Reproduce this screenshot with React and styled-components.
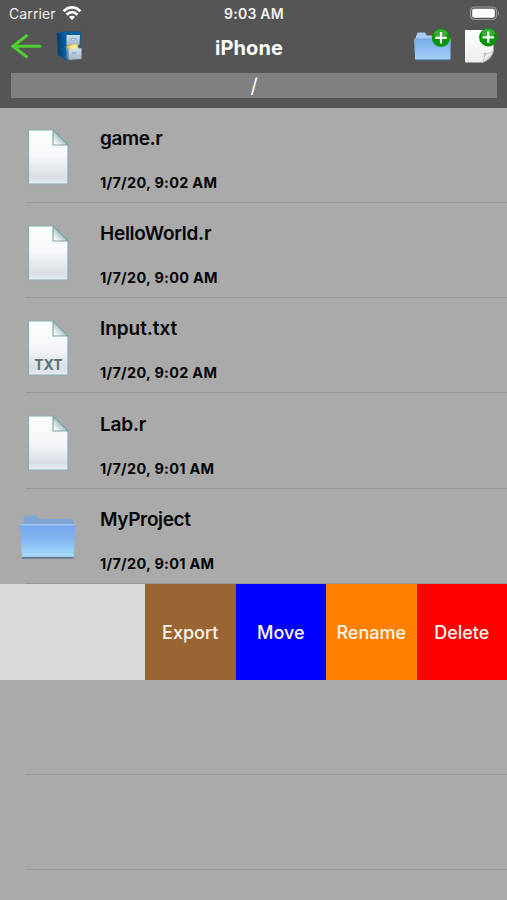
import React from 'react';
import styled, { createGlobalStyle } from 'styled-components';

const GlobalStyle = createGlobalStyle`
	* {
		box-sizing: border-box;
		margin: 0;
		padding: 0;
	}

	body {
		background: #aaaaaa;
		font-family: Inter, 'Liberation Sans', sans-serif;
		overflow: hidden;
	}
`;

const Screen = styled.div`
	display: flex;
	flex-direction: column;
	width: 507px;
	height: 900px;
	overflow: hidden;
	background: #aaaaaa;
`;

const Header = styled.header`
	flex: none;
	display: flex;
	flex-direction: column;
	height: 107.6px;
	background: #555555;
	color: #ffffff;
`;

const StatusBar = styled.div`
	display: grid;
	grid-template-columns: 1fr auto 1fr;
	align-items: center;
	height: 27px;
	padding: 0 7px 0 9px;
	font-size: 14px;
	line-height: 27px;
`;

const Carrier = styled.div`
	display: flex;
	align-items: center;
	gap: 6px;
	color: #eeeeee;
	letter-spacing: 0.12px;
`;

const Clock = styled.div`
	margin-right: 1px;
	font-weight: 600;
	letter-spacing: 0.25px;
	color: #f2f2f2;
`;

const Battery = styled.div`
	display: flex;
	justify-content: flex-end;
`;

const NavBar = styled.nav`
	display: grid;
	grid-template-columns: 1fr auto 1fr;
	align-items: center;
	height: 42px;
	padding: 0 8px 0 10px;
`;

const NavGroup = styled.div`
	display: flex;
	align-items: flex-start;
	justify-content: ${(props) => props.$justify || 'flex-start'};
	gap: ${(props) => props.$gap}px;
	height: 42px;
`;

const Title = styled.h1`
	font-size: 20px;
	font-weight: 700;
	letter-spacing: 0.05px;
	margin-right: 11px;
`;

const PathBar = styled.div`
	height: 25px;
	margin: 4px 10px 0 11px;
	background: #808080;
	text-align: center;
	font-size: 20px;
	line-height: 27px;
`;

const List = styled.ul`
	flex: 1;
	list-style: none;
`;

const Row = styled.li`
	display: flex;
	height: 95.33px;
	background: linear-gradient(#999999, #999999) 26px 100% / 100% 1.2px no-repeat;
`;

const IconCell = styled.div`
	flex: none;
	display: flex;
	align-items: center;
	justify-content: center;
	width: 96px;
	padding-top: 4px;
`;

const Details = styled.div`
	display: flex;
	flex-direction: column;
	padding: 19px 0 0 4px;
`;

const FileName = styled.div`
	font-size: 19px;
	font-weight: 600;
	line-height: 24px;
	letter-spacing: ${(props) => props.$spacing || 0}px;
	color: #050505;
`;

const FileDate = styled.div`
	margin-top: 22px;
	font-size: 14.5px;
	font-weight: 700;
	line-height: 20px;
	letter-spacing: 0.27px;
	color: #050505;
`;

const SwipedRow = styled.li`
	display: flex;
	justify-content: flex-end;
	height: 95.33px;
	background: #d9d9d9;
`;

const Action = styled.button`
	width: 90.5px;
	padding-top: 1px;
	border: none;
	background: ${(props) => props.$color};
	color: #fff4ec;
	font-family: inherit;
	font-size: 18px;
	font-weight: 450;
	letter-spacing: 0;
`;

const IconText = styled.text`
	font: 700 15px Inter, 'Liberation Sans', sans-serif;
	fill: #58717e;
`;

function WifiIcon() {
	return (
		<svg width='20' height='15' viewBox='0 0 20 15'>
			<g fill='none' stroke='#fff' strokeWidth='2.8'>
				<path d='M1.5 5.2 Q10 -2.5 18.5 5.2' />
				<path d='M4.6 8.7 Q10 3.6 15.4 8.7' />
			</g>
			<path d='M7 11 Q10 8.4 13 11 L10 14Z' fill='#fff' />
		</svg>
	);
}

function BatteryIcon() {
	return (
		<svg width='31' height='15' viewBox='0 0 31 15'>
			<rect x='1.5' y='1' width='26' height='12.5' rx='4' fill='none' stroke='#999' strokeWidth='1.2' />
			<rect x='3.2' y='2.8' width='22.6' height='9' rx='2' fill='#fff' />
			<path d='M29 5 Q31 7.2 29 9.5Z' fill='#999' />
		</svg>
	);
}

function BackIcon() {
	return (
		<svg width='33' height='36' viewBox='0 0 33 36'>
			<path
				d='M30 19.3 H3.5 M16.5 8.8 L3 19.3 L16.5 29.7'
				fill='none'
				stroke='#4fcb34'
				strokeWidth='3'
				strokeLinecap='round'
			/>
		</svg>
	);
}

function CabinetIcon() {
	return (
		<svg width='30' height='36' viewBox='0 0 30 36'>
			<defs>
				<linearGradient id='cabinetSide'>
					<stop offset='0' stopColor='#063967' />
					<stop offset='1' stopColor='#0865a8' />
				</linearGradient>
				<linearGradient id='drawer' x2='0' y2='1'>
					<stop offset='0' stopColor='#d0deec' />
					<stop offset='1' stopColor='#a1b7cd' />
				</linearGradient>
			</defs>
			<path d='M3 6 L8.5 4.5 H27 L26 30 L12.5 33 L4 28Z' fill='#0b5d9c' />
			<path d='M3 6 L11.5 8 L12.5 33 L4 28Z' fill='url(#cabinetSide)' />
			<path d='M12.5 8 H26 L25.5 18 H12.5Z' fill='url(#drawer)' />
			<path d='M17 11.5 H21.5 V13 H17Z' fill='#edf3f8' stroke='#718ca9' strokeWidth='.6' />
			<path d='M12.5 18.5 L24 16.8 L25 25 L12.5 24Z' fill='#e9c74c' />
			<path d='M16 19.5 L21.5 17.5 L24 21.5 L17 23Z' fill='#fff0a0' />
			<path d='M12.5 20.5 L14.8 22.5 V33 L12.5 31Z' fill='#718ea9' />
			<path d='M14.5 22 L27.5 21.2 V32 L14.8 33Z' fill='url(#drawer)' />
			<path d='M18.5 25.5 H22 V26.7 H18.5Z' fill='#edf3f8' stroke='#74889b' strokeWidth='.6' />
		</svg>
	);
}

function PlusBadge({ cx, cy }) {
	return (
		<g>
			<circle cx={cx} cy={cy} r='9.2' fill='#079507' />
			<ellipse cx={cx} cy={cy - 4.2} rx='6.7' ry='4.1' fill='#52bc4a' opacity='.65' />
			<path
				d={`M${cx - 5.8} ${cy} H${cx + 5.8} M${cx} ${cy - 5.8} V${cy + 5.8}`}
				stroke='#fff'
				strokeWidth='2.2'
			/>
		</g>
	);
}

function NewFolderIcon() {
	return (
		<svg width='40' height='36' viewBox='0 0 40 36'>
			<defs>
				<linearGradient id='newFolder' x2='0' y2='1'>
					<stop offset='0' stopColor='#76a9e5' />
					<stop offset='1' stopColor='#a4d1ff' />
				</linearGradient>
			</defs>
			<path d='M3.5 11 L5.5 5.5 H13 L15 8.5 H37 L38.5 12V32H3.5Z' fill='#a7cbed' />
			<path d='M2 11.5 H38.3 L37.8 32.8 H3.2Z' fill='url(#newFolder)' />
			<path d='M3.4 32.8 H37.8' stroke='#5684b7' />
			<PlusBadge cx={29} cy={10.8} />
		</svg>
	);
}

function NewFileIcon() {
	return (
		<svg width='34' height='38' viewBox='0 0 34 38'>
			<defs>
				<linearGradient id='newPage' x2='0' y2='1'>
					<stop offset='0' stopColor='#fff' />
					<stop offset='1' stopColor='#ededed' />
				</linearGradient>
				<linearGradient id='pageCurl' x2='1' y2='1'>
					<stop offset='.15' stopColor='#999' />
					<stop offset='.4' stopColor='#fff' />
					<stop offset='.7' stopColor='#aaa' />
				</linearGradient>
			</defs>
			<path d='M0 3 H28.5 V24 Q27 32 18 35.5 H0Z' fill='url(#newPage)' />
			<path d='M28.5 24 Q27 32 18 35.5 Q20.5 30 19 26.5 Q25 27 28.5 24Z' fill='url(#pageCurl)' stroke='#999' strokeWidth='.5' />
			<PlusBadge cx={23.3} cy={10.3} />
		</svg>
	);
}

function FileIcon({ label }) {
	return (
		<svg width='42' height='58' viewBox='0 0 42 58'>
			<defs>
				<linearGradient id='sheet' x2='0' y2='1'>
					<stop offset='0' stopColor='#fafdfe' />
					<stop offset='.5' stopColor='#f5f7fa' />
					<stop offset='.87' stopColor='#d9dfe4' />
					<stop offset='1' stopColor='#e6eef2' />
				</linearGradient>
				<linearGradient id='fold' x1='1' y1='0' x2='0' y2='1'>
					<stop offset='.45' stopColor='#a3bcc2' />
					<stop offset='.9' stopColor='#fff' />
				</linearGradient>
			</defs>
			<path d='M1.5 2 H26 L41 17 V56 H1.5Z' fill='url(#sheet)' stroke='#8babb2' strokeWidth='1.2' />
			<path d='M26 2 V17 H41Z' fill='url(#fold)' stroke='#7ba0a9' strokeWidth='1.1' />
			{label && (
				<IconText x='7.2' y='51' textLength='28.5' lengthAdjust='spacingAndGlyphs'>
					{label}
				</IconText>
			)}
		</svg>
	);
}

function FolderIcon() {
	return (
		<svg width='58' height='50' viewBox='0 0 58 50'>
			<defs>
				<linearGradient id='folder' x2='0' y2='1'>
					<stop offset='0' stopColor='#73a7ed' />
					<stop offset='.45' stopColor='#83b5f2' />
					<stop offset='1' stopColor='#a8dcff' />
				</linearGradient>
			</defs>
			<path d='M4.5 14 V4 Q5 1.5 8 1.5 H16 Q18 1.5 19.5 5 H51 Q54 5 54.5 8.5 V14Z' fill='#7fa5d6' />
			<path d='M3 42.5 H54.5 V44.8 H3Z' fill='#617991' />
			<path d='M1 10.8 H56.8 L54.7 42.8 H3Z' fill='url(#folder)' />
			<path d='M1.5 10.8 H56.5' stroke='#a9cbf4' strokeWidth='1.3' />
		</svg>
	);
}

const files = [
	{ name: 'game.r', date: '1/7/20, 9:02 AM', spacing: -0.4 },
	{ name: 'HelloWorld.r', date: '1/7/20, 9:00 AM', spacing: -0.25 },
	{ name: 'Input.txt', date: '1/7/20, 9:02 AM', label: 'TXT', spacing: -0.05 },
	{ name: 'Lab.r', date: '1/7/20, 9:01 AM', spacing: -0.2 },
	{ name: 'MyProject', date: '1/7/20, 9:01 AM', folder: true, spacing: -0.35 },
];

const actions = [
	{ label: 'Export', color: '#996633' },
	{ label: 'Move', color: '#0000ff' },
	{ label: 'Rename', color: '#ff8000' },
	{ label: 'Delete', color: '#ff0000' },
];

function App() {
	return (
		<Screen>
			<GlobalStyle />
			<Header>
				<StatusBar>
					<Carrier>
						Carrier
						<WifiIcon />
					</Carrier>
					<Clock>9:03 AM</Clock>
					<Battery>
						<BatteryIcon />
					</Battery>
				</StatusBar>
				<NavBar>
					<NavGroup $gap={11}>
						<BackIcon />
						<CabinetIcon />
					</NavGroup>
					<Title>iPhone</Title>
					<NavGroup $justify='flex-end' $gap={13}>
						<NewFolderIcon />
						<NewFileIcon />
					</NavGroup>
				</NavBar>
				<PathBar>/</PathBar>
			</Header>
			<List>
				{files.map((file) => (
					<Row key={file.name}>
						<IconCell>{file.folder ? <FolderIcon /> : <FileIcon label={file.label} />}</IconCell>
						<Details>
							<FileName $spacing={file.spacing}>{file.name}</FileName>
							<FileDate>{file.date}</FileDate>
						</Details>
					</Row>
				))}
				<SwipedRow>
					{actions.map((action) => (
						<Action key={action.label} $color={action.color}>
							{action.label}
						</Action>
					))}
				</SwipedRow>
				<Row />
				<Row />
			</List>
		</Screen>
	);
}

export default App;
